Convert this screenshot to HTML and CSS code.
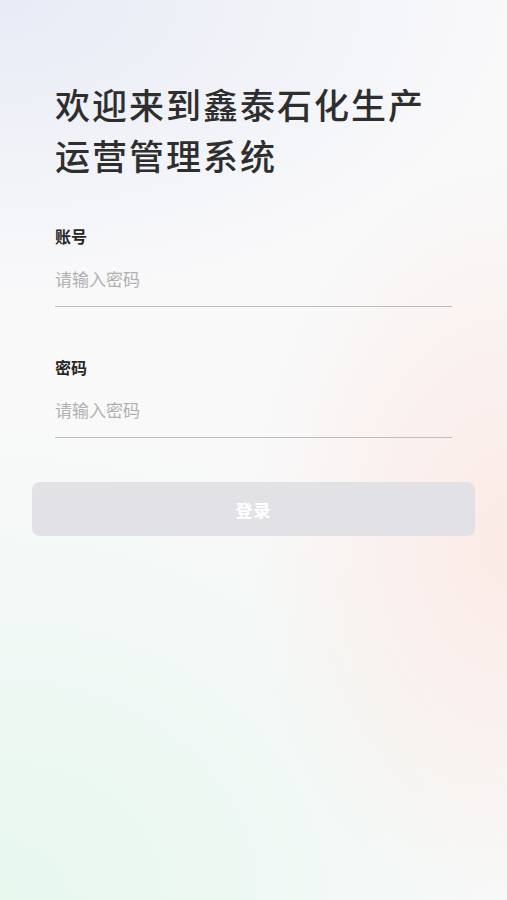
FILE: index.html
```html
<!DOCTYPE html>
<html lang="zh-CN">
<head>
    <meta charset="UTF-8">
    <meta name="viewport" content="width=device-width, initial-scale=1.0">
    <title>登录</title>
    <link rel="stylesheet" href="styles.css">
</head>
<body>
    <div class="page">
        <h1 class="title">欢迎来到鑫泰石化生产<br>运营管理系统</h1>

        <div class="form">
            <!-- 账号 -->
            <div class="field">
                <label class="label" for="account">账号</label>
                <input class="input" type="text" id="account" placeholder="请输入密码">
            </div>

            <!-- 密码 -->
            <div class="field">
                <label class="label" for="password">密码</label>
                <input class="input" type="password" id="password" placeholder="请输入密码">
            </div>
        </div>

        <button class="login-btn">登录</button>
    </div>
</body>
</html>
```

FILE: styles.css
```css
html, body {
    margin: 0;
    padding: 0;
}

body {
    font-family: "Noto Sans CJK SC", "Noto Sans", sans-serif;
    color: #222;
    background-color: #f9f9fa;
    background-image:
        radial-gradient(ellipse 520px 300px at 0% 0%, rgba(232, 235, 246, 1) 0, rgba(232, 235, 246, 0) 100%),
        radial-gradient(ellipse 260px 380px at 100% 60%, rgba(251, 234, 229, 1) 0, rgba(251, 234, 229, 0) 100%),
        radial-gradient(ellipse 560px 480px at 0% 100%, rgba(230, 247, 238, 1) 0, rgba(230, 247, 238, 0) 100%);
}

.page {
    min-height: 900px;
    box-sizing: border-box;
    padding: 78px 32px 0;
}

.title {
    margin: 0 0 0 23px;
    font-size: 35px;
    font-weight: 500;
    line-height: 51px;
    letter-spacing: 2px;
    color: #2e2e2e;
}

.form {
    display: flex;
    flex-direction: column;
    gap: 49px;
    margin: 45px 23px 0;
}

.field {
    display: flex;
    flex-direction: column;
}

.label {
    font-size: 16px;
    font-weight: 700;
    line-height: 22px;
    color: #262626;
}

.input {
    margin-top: 3px;
    height: 56px;
    padding: 0;
    border: none;
    border-bottom: 1px solid #bdbdbd;
    background: transparent;
    font-family: inherit;
    font-size: 17px;
    color: #333;
    outline: none;
}

.input::placeholder {
    color: #b0b0b0;
}

.login-btn {
    display: block;
    width: 100%;
    height: 54px;
    margin-top: 44px;
    border: none;
    border-radius: 8px;
    background: #e2e2e6;
    color: #fff;
    font-family: inherit;
    font-size: 17px;
    font-weight: 700;
    letter-spacing: 1px;
}
```
